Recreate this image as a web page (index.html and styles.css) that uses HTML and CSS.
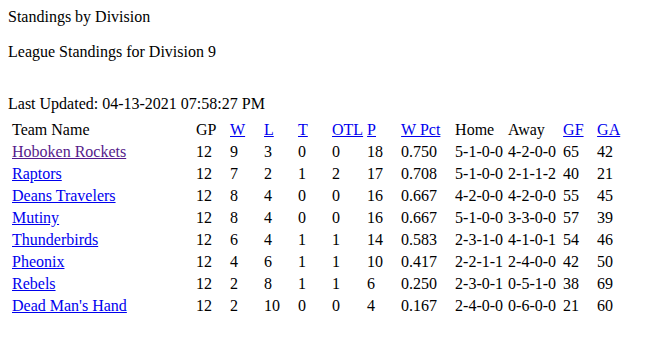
FILE: index.html
```html
<!DOCTYPE html>
<html>
<head>
<meta charset="utf-8">
<title>Standings by Division</title>
<link rel="stylesheet" href="styles.css">
</head>
<body>
<div class="title">Standings by Division</div>
<div class="subtitle">League Standings for Division 9</div>
<div class="updated">Last Updated: 04-13-2021 07:58:27 PM</div>
<table class="standings">
  <thead>
    <tr>
      <th class="c-team">Team Name</th>
      <th class="c-num">GP</th>
      <th class="c-num"><a href="#">W</a></th>
      <th class="c-num"><a href="#">L</a></th>
      <th class="c-num"><a href="#">T</a></th>
      <th class="c-otl"><a href="#">OTL</a></th>
      <th class="c-num"><a href="#">P</a></th>
      <th class="c-pct"><a href="#">W Pct</a></th>
      <th class="c-home">Home</th>
      <th class="c-away">Away</th>
      <th class="c-num"><a href="#">GF</a></th>
      <th class="c-num"><a href="#">GA</a></th>
    </tr>
  </thead>
  <tbody>
    <tr><td><a class="visited" href="#">Hoboken Rockets</a></td><td>12</td><td>9</td><td>3</td><td>0</td><td>0</td><td>18</td><td>0.750</td><td>5-1-0-0</td><td>4-2-0-0</td><td>65</td><td>42</td></tr>
    <tr><td><a href="#">Raptors</a></td><td>12</td><td>7</td><td>2</td><td>1</td><td>2</td><td>17</td><td>0.708</td><td>5-1-0-0</td><td>2-1-1-2</td><td>40</td><td>21</td></tr>
    <tr><td><a href="#">Deans Travelers</a></td><td>12</td><td>8</td><td>4</td><td>0</td><td>0</td><td>16</td><td>0.667</td><td>4-2-0-0</td><td>4-2-0-0</td><td>55</td><td>45</td></tr>
    <tr><td><a href="#">Mutiny</a></td><td>12</td><td>8</td><td>4</td><td>0</td><td>0</td><td>16</td><td>0.667</td><td>5-1-0-0</td><td>3-3-0-0</td><td>57</td><td>39</td></tr>
    <tr><td><a href="#">Thunderbirds</a></td><td>12</td><td>6</td><td>4</td><td>1</td><td>1</td><td>14</td><td>0.583</td><td>2-3-1-0</td><td>4-1-0-1</td><td>54</td><td>46</td></tr>
    <tr><td><a href="#">Pheonix</a></td><td>12</td><td>4</td><td>6</td><td>1</td><td>1</td><td>10</td><td>0.417</td><td>2-2-1-1</td><td>2-4-0-0</td><td>42</td><td>50</td></tr>
    <tr><td><a href="#">Rebels</a></td><td>12</td><td>2</td><td>8</td><td>1</td><td>1</td><td>6</td><td>0.250</td><td>2-3-0-1</td><td>0-5-1-0</td><td>38</td><td>69</td></tr>
    <tr><td><a href="#">Dead Man's Hand</a></td><td>12</td><td>2</td><td>10</td><td>0</td><td>0</td><td>4</td><td>0.167</td><td>2-4-0-0</td><td>0-6-0-0</td><td>21</td><td>60</td></tr>
  </tbody>
</table>
</body>
</html>
```

FILE: styles.css
```css
html {
  background: #ffffff;
}

body {
  margin: 8px;
  font-family: "Liberation Serif", "Times New Roman", serif;
  font-size: 16px;
  color: #000000;
}

.subtitle {
  margin-top: 17px;
}

.updated {
  margin-top: 34px;
}

.standings {
  margin-top: 5px;
  margin-left: 1px;
  border-spacing: 2px;
  border-collapse: separate;
}

.standings th,
.standings td {
  padding: 1px;
  text-align: left;
  font-weight: normal;
  vertical-align: middle;
  white-space: nowrap;
}

.standings a {
  color: #0000ee;
  text-decoration: underline;
}

.standings a.visited {
  color: #551a8b;
}

.c-team {
  width: 180px;
}

.c-num {
  width: 30px;
}

.c-otl {
  width: 31px;
}

.c-pct {
  width: 50px;
}

.c-home {
  width: 49px;
}

.c-away {
  width: 51px;
}
```
